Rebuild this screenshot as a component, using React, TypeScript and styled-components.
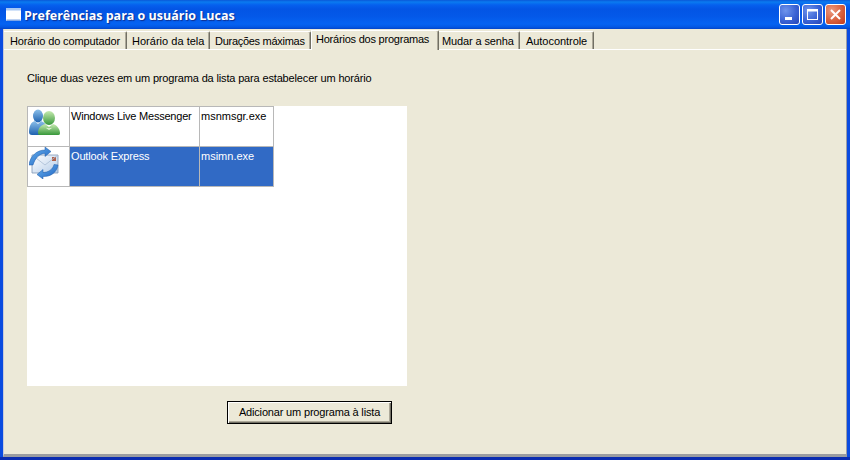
import React from "react";
import styled, { createGlobalStyle } from "styled-components";

const Global = createGlobalStyle`
  html, body { margin: 0; padding: 0; background: #0a42d0; }
  #root { width: 850px; height: 460px; overflow: hidden; }
`;

const Win = styled.div`
  width: 850px;
  height: 460px;
  box-sizing: border-box;
  display: flex;
  flex-direction: column;
  font-family: "Liberation Sans", "Noto Sans", sans-serif;
  background: linear-gradient(180deg, #0a4be0 calc(100% - 3px), #0a2cb0 0);
`;

const TitleBar = styled.div`
  height: 29px;
  flex: none;
  box-sizing: border-box;
  display: flex;
  align-items: center;
  padding: 0 3px 0 6px;
  gap: 3px;
  background: linear-gradient(180deg, #0a58d8 0, #0a7bf0 2px, #0560ee 5px, #0355e5 9px, #0458e8 16px, #0563f2 24px, #0358e4 27px, #0345c8 29px);
`;

const AppGlyph = styled.svg`
  width: 15px;
  height: 13px;
  flex: none;
`;

const TitleText = styled.div`
  flex: 1;
  padding-top: 2px;
  font-family: "Open Sans", sans-serif;
  font-weight: 700;
  font-size: 12.5px;
  color: #fff;
  text-shadow: 1px 1px 1px #0f2f8f;
`;

const WinButtons = styled.div`
  display: flex;
  gap: 2px;
  padding-right: 1px;
`;

const WinBtn = styled.div<{ $close?: boolean }>`
  width: 21px;
  height: 21px;
  box-sizing: border-box;
  border: 1px solid #fff;
  border-radius: 3px;
  display: flex;
  align-items: center;
  justify-content: center;
  background: ${(p) =>
    p.$close
      ? "radial-gradient(circle at 30% 30%, #ea9a80, #d8603c 55%, #c03a1c)"
      : "radial-gradient(circle at 30% 30%, #6f94ec, #3a62d4 55%, #2545b8)"};
`;

const Body = styled.div`
  flex: 1;
  min-height: 0;
  margin: 0 3px 3px 3px;
  background: #ece9d8;
  display: flex;
  flex-direction: column;
  border-left: 1px solid #c8cad8;
  border-right: 1px solid #9a9ca8;
  border-bottom: 3px solid #9a9ca0;
`;

const TabStrip = styled.div`
  height: 21px;
  flex: none;
  display: flex;
  align-items: flex-end;
  box-sizing: border-box;
  border-bottom: 1px solid #fff;
`;

const Tab = styled.div<{ $w: number; $pad: number; $ls: number; $active?: boolean }>`
  width: ${(p) => p.$w}px;
  box-sizing: border-box;
  height: ${(p) => (p.$active ? 20 : 18)}px;
  margin-bottom: ${(p) => (p.$active ? -1 : 0)}px;
  padding: ${(p) => (p.$active ? 2 : 3)}px 0 0 ${(p) => p.$pad}px;
  font-size: 11px;
  line-height: 13px;
  letter-spacing: ${(p) => p.$ls}px;
  color: #000;
  white-space: nowrap;
  background: #ece9d8;
  border-top: 1px solid #fff;
  border-left: ${(p) => (p.$active ? "1px solid #fff" : "none")};
  border-right: 1px solid #716f64;
  box-shadow: inset -1px 0 0 #aca899;
  border-top-right-radius: 2px;
`;

const Content = styled.div`
  flex: 1;
  padding: 22px 0 0 23px;
  display: flex;
  flex-direction: column;
`;

const Hint = styled.div`
  font-size: 11px;
  line-height: 13px;
  height: 13px;
  letter-spacing: -0.155px;
  color: #000;
`;

const ListBox = styled.div`
  margin-top: 21px;
  width: 380px;
  height: 280px;
  background: #fff;
  flex: none;
`;

const Table = styled.table`
  border-collapse: collapse;
  table-layout: fixed;
  width: 246px;
  font-size: 11px;
  line-height: 13px;
`;

const Row = styled.tr<{ $selected?: boolean }>`
  height: 40px;
  background: ${(p) => (p.$selected ? "#316ac5" : "#fff")};
  color: ${(p) => (p.$selected ? "#fff" : "#000")};
`;

const IconCell = styled.td`
  width: 42px;
  padding: 0;
  background: #fff;
  border: 1px solid #b8b8b8;
  vertical-align: top;
  box-sizing: border-box;
`;

const TextCell = styled.td<{ $w: number; $ls: number }>`
  width: ${(p) => p.$w}px;
  padding: 3px 0 0 1px;
  border: 1px solid #b8b8b8;
  vertical-align: top;
  box-sizing: border-box;
  white-space: nowrap;
  overflow: hidden;
  letter-spacing: ${(p) => p.$ls}px;
`;

const Icon = styled.svg`
  display: block;
  width: 32px;
  height: 32px;
  margin: 0 0 0 1px;
`;

const ButtonRow = styled.div`
  margin-top: 15px;
  padding-left: 200px;
`;

const Button = styled.button`
  width: 165px;
  height: 23px;
  box-sizing: border-box;
  padding: 0 0 1px;
  font-family: inherit;
  font-size: 11px;
  letter-spacing: -0.17px;
  color: #000;
  background: #ece9d8;
  border: 1px solid #000;
  box-shadow: inset 1px 1px 0 #fff, inset -1px -1px 0 #716f64, inset -2px -2px 0 #aca899;
`;

const tabs: [string, number, number, number][] = [
  ["Horário do computador", 123, 6, -0.12],
  ["Horário da tela", 83, 5, 0.02],
  ["Durações máximas", 101, 5, -0.28],
  ["Horários dos programas", 128, 4, -0.22],
  ["Mudar a senha", 81, 3, -0.12],
  ["Autocontrole", 74, 6, -0.05],
];

const MessengerIcon = () => (
  <Icon viewBox="0 0 32 32">
    <defs>
      <linearGradient id="b" x1="0" y1="0" x2="0" y2="1">
        <stop offset="0" stopColor="#8cc0ea" />
        <stop offset="1" stopColor="#1f62b0" />
      </linearGradient>
      <linearGradient id="g" x1="0" y1="0" x2="0" y2="1">
        <stop offset="0" stopColor="#c6eab0" />
        <stop offset="1" stopColor="#37983a" />
      </linearGradient>
    </defs>
    <ellipse cx="9" cy="9" rx="5" ry="6.5" fill="url(#b)" />
    <path d="M0 25c0-6 2-10 6-11l3 3 3-3c3 1 5 3 5 6l-6 8H3c-2 0-3-1-3-3z" fill="url(#b)" />
    <ellipse cx="20" cy="11" rx="6" ry="7" fill="url(#g)" />
    <path d="M9 26c0-5 3-8 7-9l4 3 4-3c4 1 7 5 7 9 0 2-1 2-3 2H12c-2 0-3 0-3-2z" fill="url(#g)" />
    <path d="M14 19c3 3 9 3 12 0l-6 4z" fill="#e4f5d6" />
  </Icon>
);

const OutlookIcon = () => (
  <Icon viewBox="0 0 32 32">
    <defs>
      <linearGradient id="env" x1="0" y1="0" x2="1" y2="1">
        <stop offset="0" stopColor="#ffffff" />
        <stop offset="1" stopColor="#b4cce8" />
      </linearGradient>
      <linearGradient id="arr" x1="0" y1="0" x2="1" y2="1">
        <stop offset="0" stopColor="#6db6f0" />
        <stop offset="1" stopColor="#1a5fc0" />
      </linearGradient>
    </defs>
    <path d="M3 8h26v18H3z" fill="url(#env)" stroke="#8298b4" strokeWidth="0.8" />
    <rect x="23" y="10" width="4" height="4" fill="#b0604a" />
    <path d="M3 8l13 10 13-10" fill="none" stroke="#a9bcd4" strokeWidth="0.8" />
    <path d="M0 18C1 9 8 3 16 3V0l6 4.5-6 5V6.5c-6 0-10 5-12 11.5z" fill="url(#arr)" stroke="#1d5aa8" strokeWidth="0.5" />
    <path d="M29 18c-1 7-7 12-15 11.5V32l-6-4.500 6-5v3c5 0 10-3 11-8z" fill="url(#arr)" stroke="#1d5aa8" strokeWidth="0.5" />
  </Icon>
);

export default function App() {
  return (
    <Win>
      <Global />
      <TitleBar>
        <AppGlyph viewBox="0 0 15 13">
          <rect x="0" y="0" width="15" height="13" rx="1" fill="#fff" />
          <rect x="0" y="0" width="15" height="2.5" fill="#a8c8f4" />
          <rect x="0.5" y="11.5" width="14" height="1.5" fill="#7fa6e6" />
        </AppGlyph>
        <TitleText>Preferências para o usuário Lucas</TitleText>
        <WinButtons>
          <WinBtn>
            <svg width="13" height="13" viewBox="0 0 13 13"><rect x="2" y="9" width="7" height="3" fill="#fff" /></svg>
          </WinBtn>
          <WinBtn>
            <svg width="13" height="13" viewBox="0 0 13 13"><rect x="1.5" y="2.5" width="10" height="9" fill="none" stroke="#fff" /><rect x="1" y="1" width="11" height="2.5" fill="#fff" /></svg>
          </WinBtn>
          <WinBtn $close>
            <svg width="13" height="13" viewBox="0 0 13 13"><path d="M2 2l9 9M11 2l-9 9" stroke="#fff" strokeWidth="2" /></svg>
          </WinBtn>
        </WinButtons>
      </TitleBar>
      <Body>
        <TabStrip>
          {tabs.map(([t, w, pad, ls], i) => (
            <Tab key={t} $w={w} $pad={pad} $ls={ls} $active={i === 3}>{t}</Tab>
          ))}
        </TabStrip>
        <Content>
          <Hint>Clique duas vezes em um programa da lista para estabelecer um horário</Hint>
          <ListBox>
            <Table>
              <tbody>
                <Row>
                  <IconCell><MessengerIcon /></IconCell>
                  <TextCell $w={130} $ls={-0.22}>Windows Live Messenger</TextCell>
                  <TextCell $w={74} $ls={0}>msnmsgr.exe</TextCell>
                </Row>
                <Row $selected>
                  <IconCell><OutlookIcon /></IconCell>
                  <TextCell $w={130} $ls={-0.15}>Outlook Express</TextCell>
                  <TextCell $w={74} $ls={0}>msimn.exe</TextCell>
                </Row>
              </tbody>
            </Table>
          </ListBox>
          <ButtonRow>
            <Button>Adicionar um programa à lista</Button>
          </ButtonRow>
        </Content>
      </Body>
    </Win>
  );
}
